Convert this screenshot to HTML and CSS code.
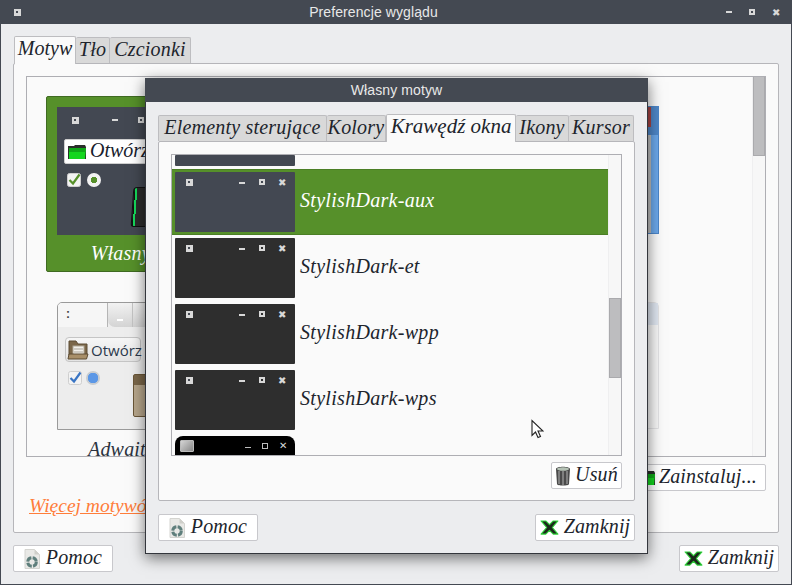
FILE: index.html
```html
<!DOCTYPE html>
<html lang="pl">
<head>
<meta charset="utf-8">
<title>Preferencje wyglądu</title>
<link rel="stylesheet" href="styles.css">
</head>
<body>
<svg class="sprite" aria-hidden="true">
  <symbol id="help" viewBox="0 0 16 20">
    <path d="M1 0.5h9.500l5 5v14H1z" fill="#e9e9e6" stroke="#d4d4d0"/>
    <path d="M10.500 0.500v5h5z" fill="#cfcfca"/>
    <circle cx="8" cy="13" r="4.300" fill="none" stroke="#5f7f7c" stroke-width="3" stroke-dasharray="5.500 1.300"/>
  </symbol>
  <symbol id="xgreen" viewBox="0 0 20 16">
    <path d="M1 1h5l4 4 4-4h5l-6 7 6 7h-5l-4-4-4 4H1l6-7z" fill="#1b2a1b" stroke="#2fd13a" stroke-width="1.200" stroke-linejoin="round"/>
  </symbol>
  <symbol id="folder" viewBox="0 0 20 18">
    <path d="M1 3h6l1-1h10l1 2v12H1z" fill="#2a2f2a"/>
    <path d="M2 5h17l-1 11H2z" fill="#14d61f"/>
    <path d="M2 5h17l-1 4H2z" fill="#0fa818"/>
  </symbol>
  <symbol id="bin" viewBox="0 0 16 20">
    <path d="M1 3c0-3 14-3 14 0l-1 15c0 2-12 2-12 0z" fill="#4a4a4a"/>
    <path d="M4 5v13M8 5v14M12 5v13" stroke="#8c8c8c" stroke-width="1.600"/>
    <ellipse cx="8" cy="3" rx="6" ry="1.800" fill="#b5c2b5"/>
  </symbol>
  <symbol id="check" viewBox="0 0 14 14">
    <rect x="0.500" y="0.500" width="13" height="13" rx="2" fill="#f3f3f3" stroke="#cfcfcf"/>
    <path d="M2.500 7l3.500 3.500 6.500-9" fill="none" stroke="currentColor" stroke-width="2.200"/>
  </symbol>
  <symbol id="brownfolder" viewBox="0 0 22 20">
    <path d="M2 1h7l2 3h9v11H2z" fill="#7b6749" stroke="#5d4c34"/>
    <rect x="6" y="6" width="11" height="9" fill="#f2f0ea" stroke="#b0a898"/>
    <path d="M7 9h9M7 12h9" stroke="#aaa59a"/>
    <path d="M2 14h19l-1.500 5H1z" fill="#a88f69" stroke="#5d4c34"/>
  </symbol>
</svg>

<div class="window">
  <header class="titlebar">
    <span class="wc wc-menu"></span>
    <span class="title">Preferencje wyglądu</span>
    <span class="wc wc-min"></span><span class="wc wc-max"></span><span class="wc wc-close">✖</span>
  </header>
  <main class="content">
    <nav class="tabs main-tabs">
      <span class="tab active">Motyw</span><span class="tab">Tło</span><span class="tab">Czcionki</span>
    </nav>
    <section class="panel">
      <div class="frame">
        <div class="gallery">
          <figure class="card selected">
            <div class="shot dark">
              <div class="shot-bar"><span class="wc wc-menu"></span><span class="wc wc-min"></span><span class="wc wc-max"></span></div>
              <span class="mini-btn"><svg class="i18"><use href="#folder"/></svg><span class="lift">Otwórz</span></span>
              <div class="mini-checks">
                <svg class="i14 green"><use href="#check"/></svg><span class="radio"></span>
              </div>
              <span class="big-green"></span>
            </div>
            <figcaption>Własny motyw</figcaption>
          </figure>
          <figure class="card"></figure>
          <figure class="card">
            <div class="shot blue"><span class="blue-head"></span><span class="blue-red"></span><span class="blue-inner"></span></div>
          </figure>
          <figure class="card">
            <div class="shot light">
              <div class="light-tabs"><span class="lt on">:</span><span class="lt second"><span class="lt-bar"></span></span><span class="lt"></span></div>
              <span class="mini-btn sans"><svg class="i22"><use href="#brownfolder"/></svg>Otwórz</span>
              <div class="mini-checks tight">
                <svg class="i14 bluec"><use href="#check"/></svg><span class="radio blue-radio"></span>
              </div>
              <span class="big-brown"></span>
            </div>
            <figcaption class="ink">Adwaita</figcaption>
          </figure>
          <figure class="card"></figure>
          <figure class="card">
            <div class="shot pale"><span class="pale-head"></span></div>
          </figure>
        </div>
        <div class="vscroll"><span class="vthumb"></span></div>
      </div>
      <div class="action-row">
        <button class="btn install"><svg class="i18"><use href="#folder"/></svg>Zainstaluj...</button>
      </div>
      <a class="more" href="#">Więcej motywów w sieci</a>
    </section>
    <footer class="footer">
      <button class="btn wide"><svg class="i-help"><use href="#help"/></svg>Pomoc</button>
      <button class="btn wide close"><svg class="i-x"><use href="#xgreen"/></svg>Zamknij</button>
    </footer>
  </main>
</div>

<div class="dialog">
  <header class="titlebar dialog-title"><span class="title small">Własny motyw</span></header>
  <div class="dialog-body">
    <nav class="tabs dtabs">
      <span class="tab">Elementy sterujące</span><span class="tab">Kolory</span><span class="tab active">Krawędź okna</span><span class="tab">Ikony</span><span class="tab">Kursor</span>
    </nav>
    <section class="panel dpanel">
      <div class="list-frame">
        <div class="list">
          <div class="row stub"><span class="thumb steel"></span></div>
          <div class="row sel">
            <div class="thumb steel"><span class="wc wc-menu"></span><span class="spring"></span><span class="wc wc-min"></span><span class="wc wc-max"></span><span class="wc wc-close">✖</span></div>
            <span class="row-name">StylishDark-aux</span>
          </div>
          <div class="row">
            <div class="thumb coal"><span class="wc wc-menu"></span><span class="spring"></span><span class="wc wc-min"></span><span class="wc wc-max"></span><span class="wc wc-close">✖</span></div>
            <span class="row-name">StylishDark-et</span>
          </div>
          <div class="row">
            <div class="thumb coal"><span class="wc wc-menu"></span><span class="spring"></span><span class="wc wc-min"></span><span class="wc wc-max"></span><span class="wc wc-close">✖</span></div>
            <span class="row-name">StylishDark-wpp</span>
          </div>
          <div class="row">
            <div class="thumb coal"><span class="wc wc-menu"></span><span class="spring"></span><span class="wc wc-min"></span><span class="wc wc-max"></span><span class="wc wc-close">✖</span></div>
            <span class="row-name">StylishDark-wps</span>
          </div>
          <div class="row">
            <div class="thumb black"><span class="note"></span><span class="spring"></span><span class="bk-min"></span><span class="bk-max"></span><span class="bk-close">✕</span></div>
          </div>
        </div>
        <div class="vscroll inner"><span class="vthumb lower"></span></div>
      </div>
      <div class="action-row dactions">
        <button class="btn remove"><svg class="i-bin"><use href="#bin"/></svg>Usuń</button>
      </div>
    </section>
    <footer class="footer dfooter">
      <button class="btn wide"><svg class="i-help"><use href="#help"/></svg>Pomoc</button>
      <button class="btn wide close"><svg class="i-x"><use href="#xgreen"/></svg>Zamknij</button>
    </footer>
  </div>
</div>

<svg class="cursor" viewBox="0 0 13 19" aria-hidden="true"><path d="M1 1v15l3.500-3.500 2.500 5.500 2.500-1-2.500-5.500h5z" fill="#fff" stroke="#222" stroke-width="1.100"/></svg>
</body>
</html>
```

FILE: styles.css
```css
* { box-sizing: border-box; }
html, body { margin: 0; padding: 0; }
body {
  position: relative;
  width: 792px;
  height: 585px;
  overflow: hidden;
  font-family: "Liberation Serif", serif;
  font-style: italic;
  font-size: 20px;
  color: #20242c;
}
.sprite { position: absolute; width: 0; height: 0; }

.window {
  width: 792px;
  height: 585px;
  display: flex;
  flex-direction: column;
  background: #ecedef;
  border: 1px solid #444952;
  border-top: 0;
}
.titlebar {
  height: 24px;
  flex: none;
  display: flex;
  align-items: center;
  background: #444952;
  padding: 0 12px 0 13px;
}
.title {
  flex: 1;
  text-align: center;
  font: 14px "Liberation Sans", sans-serif;
  letter-spacing: .1px;
  color: #e8e8e8;
}
.title.small { font-size: 14px; }

.wc { display: block; flex: none; position: relative; }
.wc-menu { width: 7px; height: 7px; background: #d8d8d8; border: 2px solid #d8d8d8; }
.wc-menu::after { content: ""; position: absolute; left: 0; top: 0; width: 2px; height: 2px; background: #444952; }
.wc-min { width: 6px; height: 2px; background: #d8d8d8; }
.wc-max { width: 6px; height: 6px; border: 2px solid #d8d8d8; }
.wc-close { width: 7px; height: 7px; font: 10px/7px "DejaVu Sans", sans-serif; color: #d8d8d8; text-align: center; }
.titlebar .wc-max { margin-left: 17px; }
.titlebar .wc-close { margin-left: 17px; }

.content {
  flex: 1;
  display: flex;
  flex-direction: column;
  padding: 12px;
  min-height: 0;
}
.tabs { display: grid; height: 27px; flex: none; position: relative; z-index: 1; }
.main-tabs { grid-template-columns: 62px 34px 81px; padding-left: 1px; }
.dtabs { grid-template-columns: 169px 59px 130px 53px 65px; }
.tab {
  display: block;
  align-self: end;
  height: 26px;
  line-height: 23px;
  text-align: center;
  background: #d9d9d9;
  border: 1px solid #bdbdc0;
  border-bottom: 0;
  border-left: 0;
  border-radius: 2px 2px 0 0;
  white-space: nowrap;
  letter-spacing: .2px;
}
.tab:first-child { border-left: 1px solid #bdbdc0; }
.tab.active {
  height: 28px;
  margin-bottom: -1px;
  background: #fafafa;
  border-left: 1px solid #bdbdc0;
  line-height: 23px;
  letter-spacing: 0;
}
.dtabs .tab.active { font-size: 21px; }
.panel {
  flex: 1;
  min-height: 0;
  display: flex;
  flex-direction: column;
  background: #fafafa;
  border: 1px solid #b6b6ba;
  border-radius: 2px;
  padding: 12px;
}
.frame {
  height: 381px;
  flex: none;
  display: flex;
  background: #fafafa;
  border: 1px solid #aeaeb3;
  overflow: hidden;
}
.gallery {
  flex: 1;
  display: grid;
  grid-template-columns: repeat(3, 208px);
  grid-auto-rows: 176px;
  row-gap: 20px;
  padding: 19px 0 0 19px;
  overflow: hidden;
}
.card { margin: 0; padding: 10px 11px 0; border-radius: 2px; text-align: center; min-width: 0; }
.card.selected { background: #56902a; border: 1px solid #3f6a22; color: #fff; padding: 10px 10px 0; }
.card figcaption { margin-top: 5px; font-size: 20px; line-height: 26px; letter-spacing: .2px; white-space: nowrap; }
.card figcaption.ink { color: #2b3340; margin-top: 6px; text-align: left; padding-left: 31px; }
.shot { height: 128px; position: relative; text-align: left; }
.shot.dark { background: #434852; padding: 9px 0 0 15px; }
.shot-bar { display: flex; align-items: center; height: 8px; }
.shot-bar .wc-min { margin-left: 33px; }
.shot-bar .wc-max { margin-left: 20px; }
.spring { flex: 1; }
.mini-btn {
  display: inline-flex;
  align-items: center;
  gap: 3px;
  height: 25px;
  margin: 15px 0 0 -8px;
  padding: 0 4px 0 2px;
  background: #fff;
  border: 1px solid #cfcfcf;
  border-radius: 2px;
  color: #17202c;
  font-size: 20px;
  white-space: nowrap;
}
.lift { margin-bottom: 3px; }
.mini-btn.sans {
  font: 15px "Open Sans", sans-serif;
  color: #2c3a4c;
  gap: 2px;
  padding: 0 0 0 1px;
  background: linear-gradient(#f6f6f6, #e4e4e4);
  margin: 10px 0 0 7px;
  border-color: #c5c5c5;
  border-radius: 4px;
  width: 76px;
}
.i18 { width: 20px; height: 18px; flex: none; }
.i22 { width: 22px; height: 20px; flex: none; }
.i14 { width: 14px; height: 14px; display: block; }
.green { color: #56902a; }
.bluec { color: #3a75c4; }
.mini-checks { display: flex; align-items: center; gap: 6px; margin: 7px 0 0 -5px; }
.mini-checks.tight { gap: 4px; margin: 6px 0 0 10px; }
.radio { width: 14px; height: 14px; border-radius: 50%; background: radial-gradient(circle, #56902a 0 3px, #f2f2f2 3.500px); }
.blue-radio { background: radial-gradient(circle, #5b97e6 0 5px, #c8ccd0 5.500px); }
.big-green {
  position: absolute;
  left: 75px;
  top: 80px;
  width: 24px;
  height: 40px;
  background: linear-gradient(90deg, #111 0 1px, #16d85b 1px 3px, #2c2c2c 3px 100%);
  border: 1px solid #111;
  border-radius: 4px 3px 3px 3px;
  transform: skewX(-4deg);
}
.shot.light { background: #ededed; border: 1px solid #9a9a9a; border-radius: 5px 0 0 0; }
.light-tabs { display: flex; height: 24px; }
.lt { width: 25px; background: linear-gradient(#f2f2f2, #d4d4d4); border-right: 1px solid #c4c4c4; position: relative; }
.lt.on { width: 50px; background: #f6f6f6; color: #444; border-right: 1px solid #b5b5b5; border-radius: 4px 0 0 0; font: 700 12px/22px "Liberation Sans", sans-serif; text-align: left; padding-left: 8px; }
.lt.second { border-radius: 0 0 0 7px; }
.lt-bar { position: absolute; left: 9px; top: 16px; width: 6px; height: 2px; background: #fff; }
.big-brown { position: absolute; left: 75px; top: 71px; width: 30px; height: 43px; background: linear-gradient(#7b6749 0 10px, #b8a78c 10px); border: 1px solid #6a5637; border-radius: 2px; }
.shot.blue { background: #6ca8ea; border: 1px solid #4d86c9; }
.blue-head { position: absolute; left: 0; right: 0; top: 0; height: 28px; background: #4f87c8; }
.blue-red { position: absolute; right: 7px; top: 0; width: 20px; height: 20px; background: #a84444; }
.blue-inner { position: absolute; right: 7px; top: 28px; bottom: 0; width: 20px; background: #bdbdbd; }
.shot.pale { background: #f7f7f7; border: 1px solid #e2e2e4; border-radius: 0 5px 0 0; height: 127px; }
.pale-head { display: block; height: 22px; background: #dfe6f0; }

.vscroll { width: 13px; flex: none; background: #f7f7f7; border-left: 1px solid #efeff0; }
.vthumb { display: block; height: 79px; background: #bdbdbf; border: 1px solid #aaaaad; border-top: 0; }
.action-row { display: flex; justify-content: flex-end; margin-top: 7px; flex: none; }
.more { margin: 4px 0 0 3px; color: #ff7d3a; font-size: 19.500px; line-height: 22px; text-decoration: underline; white-space: nowrap; }

.btn {
  height: 27px;
  display: inline-flex;
  align-items: center;
  justify-content: center;
  gap: 6px;
  padding: 0 1px 3px;
  background: #fff;
  border: 1px solid #c8c8cc;
  border-radius: 2px;
  font: inherit;
  letter-spacing: .15px;
  color: inherit;
  white-space: nowrap;
}
.btn svg { margin-top: 3px; }
.btn.wide { width: 100px; }
.btn.remove { width: 71px; gap: 4px; }
.btn.install { width: 130px; justify-content: flex-end; padding-right: 8px; gap: 3px; }
.footer { display: flex; justify-content: space-between; margin-top: 12px; flex: none; }
.i-help { width: 16px; height: 20px; flex: none; }
.i-x { width: 19px; height: 15px; flex: none; margin-right: -1px; }
.i-bin { width: 16px; height: 20px; flex: none; }

.dialog {
  position: absolute;
  left: 145px;
  top: 78px;
  width: 503px;
  height: 476px;
  display: flex;
  flex-direction: column;
  background: #ecedef;
  border: 1px solid #33363c;
  border-top: 0;
  box-shadow: 0 4px 14px rgba(0, 0, 0, .55);
}
.dialog-title { padding: 0; margin: 0 -1px; }
.dialog-body { flex: 1; display: flex; flex-direction: column; padding: 12px; min-height: 0; }
.dpanel { padding: 12px 12px 11px; }
.list-frame { height: 302px; flex: none; display: flex; border: 1px solid #aeaeb3; background: #fafafa; overflow: hidden; }
.list { flex: 1; min-width: 0; overflow: hidden; }
.row { height: 66px; display: flex; align-items: center; padding-left: 3px; gap: 5px; }
.row.stub { height: 14px; align-items: flex-start; }
.row.stub .thumb { height: 11px; }
.row.sel { background: #56902a; border-top: 1px solid #4b7e25; border-bottom: 1px solid #4b7e25; color: #fff; }
.thumb { width: 120px; height: 60px; flex: none; display: flex; align-items: flex-start; padding: 7px 10px 0 11px; border-radius: 1px; }
.thumb .wc-min { margin-top: 3px; }
.thumb .wc-max { margin-left: 14px; }
.thumb .wc-close { margin-left: 13px; }
.steel { background: #434852; }
.coal { background: #2e2e2e; }
.thumb.black { background: #000; border-radius: 8px 8px 0 0; padding: 4px 9px 0 5px; }
.note { width: 14px; height: 12px; background: linear-gradient(135deg, #d4d4d4, #888); border: 1px solid #bbb; border-radius: 1px; }
.bk-min { width: 6px; height: 1px; margin-top: 7px; background: #bdbdbd; }
.bk-max { width: 6px; height: 6px; margin: 3px 0 0 11px; border: 1px solid #bdbdbd; }
.bk-close { width: 7px; margin-left: 11px; color: #d8d8d8; font: 10px/12px "DejaVu Sans", sans-serif; text-align: center; }
.row-name { font-size: 20px; letter-spacing: .3px; padding-bottom: 4px; white-space: nowrap; }
.vscroll.inner { width: 13px; }
.vthumb.lower { margin-top: 143px; height: 80px; border: 1px solid #aaaaad; }
.dactions { margin-top: 6px; }
.dfooter { margin-top: 13px; }

.cursor { position: absolute; left: 531px; top: 419px; width: 13px; height: 20px; }
```
